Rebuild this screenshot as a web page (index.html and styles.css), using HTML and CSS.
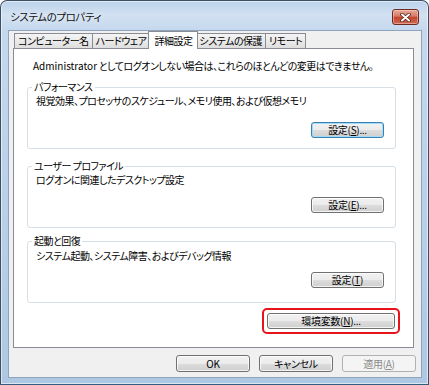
FILE: index.html
```html
<!DOCTYPE html>
<html lang="ja">
<head>
<meta charset="utf-8">
<title>システムのプロパティ</title>
<link rel="stylesheet" href="styles.css">
</head>
<body>
<div class="window">
  <div class="titlebar">
    <span class="title">システムのプロパティ</span>
    <button class="close" aria-label="閉じる">
      <svg width="11" height="9" viewBox="0 0 11 9"><path d="M2 1.5 L9 7.5 M9 1.5 L2 7.5" stroke="#5a2118" stroke-width="3.6" stroke-linecap="round"/><path d="M2 1.5 L9 7.5 M9 1.5 L2 7.5" stroke="#fff" stroke-width="2" stroke-linecap="round"/></svg>
    </button>
  </div>
  <div class="client">
    <div class="tabs">
      <div class="tab">コンピューター名</div>
      <div class="tab">ハードウェア</div>
      <div class="tab active">詳細設定</div>
      <div class="tab">システムの保護</div>
      <div class="tab">リモート</div>
    </div>
    <div class="panel">
      <p class="notice"><span class="latin">Administrator</span> としてログオンしない場合は、これらのほとんどの変更はできません。</p>
      <fieldset class="group g1">
        <legend>パフォーマンス</legend>
        <div class="group-body">
          <p class="desc">視覚効果、プロセッサのスケジュール、メモリ使用、および仮想メモリ</p>
          <button class="btn btn-set btn-default">設定(<u>S</u>)...</button>
        </div>
      </fieldset>
      <fieldset class="group g2">
        <legend>ユーザー プロファイル</legend>
        <div class="group-body">
          <p class="desc">ログオンに関連したデスクトップ設定</p>
          <button class="btn btn-set">設定(<u>E</u>)...</button>
        </div>
      </fieldset>
      <fieldset class="group g3">
        <legend>起動と回復</legend>
        <div class="group-body">
          <p class="desc">システム起動、システム障害、およびデバッグ情報</p>
          <button class="btn btn-set">設定(<u>T</u>)</button>
        </div>
      </fieldset>
      <div class="highlight">
        <button class="btn btn-env">環境変数(<u>N</u>)...</button>
      </div>
    </div>
    <div class="actions">
      <button class="btn btn-action">OK</button>
      <button class="btn btn-action">キャンセル</button>
      <button class="btn btn-action" disabled>適用(<u>A</u>)</button>
    </div>
  </div>
</div>
</body>
</html>
```
FILE: styles.css
```css
html, body {
  margin: 0;
  padding: 0;
  background: #ffffff;
}

body {
  font-family: "Noto Sans CJK JP", "Noto Sans", sans-serif;
  font-size: 10px;
  letter-spacing: -0.5px;
  font-feature-settings: "palt";
  color: #000;
}

.window {
  width: 429px;
  height: 385px;
  box-sizing: border-box;
  border: 1px solid #3d4f63;
  border-bottom-color: #2f5f7c;
  border-radius: 7px 7px 0 0;
  background: linear-gradient(180deg, #bcd2ea 0, #d2e1f2 14px, #c5d8ed 29px, #b8cfe8 60%, #aec8e3 100%);
  box-shadow: inset 0 0 0 1px rgba(255, 255, 255, 0.55);
  padding: 0 6px 6px 7px;
  display: flex;
  flex-direction: column;
}

.titlebar {
  height: 29px;
  display: flex;
  align-items: flex-start;
}

.title {
  margin-top: 8px;
  padding-left: 2px;
  font-size: 10.5px;
  letter-spacing: -0.4px;
  line-height: 15px;
  color: #111;
  text-shadow: 0 0 6px rgba(255, 255, 255, 0.9);
}

.close {
  margin-left: auto;
  margin-top: 8px;
  margin-right: 3px;
  width: 27px;
  height: 16px;
  padding: 0;
  border: 1px solid #6e2b22;
  border-radius: 3px;
  background: linear-gradient(180deg, #e9a99a 0, #d77a66 45%, #c4432d 50%, #cf6a51 100%);
  box-shadow: inset 0 0 0 1px rgba(255, 220, 210, 0.45);
  display: flex;
  align-items: center;
  justify-content: center;
}

.client {
  flex: 1;
  background: #f0f0f0;
  border: 1px solid #8ea4bc;
  display: flex;
  flex-direction: column;
}

.tabs {
  height: 17px;
  display: flex;
  align-items: flex-end;
  margin-left: 5px;
}

.tab {
  height: 14px;
  box-sizing: content-box;
  border: 1px solid #898c95;
  border-bottom: none;
  border-right: none;
  padding: 0 3px;
  background: linear-gradient(180deg, #f4f4f4 0, #eaeaea 50%, #dedede 100%);
  display: flex;
  align-items: center;
  line-height: 14px;
  white-space: nowrap;
}

.tab:last-child {
  border-right: 1px solid #898c95;
}

.tab.active {
  height: 17px;
  margin-bottom: -1px;
  margin-left: -1px;
  margin-right: -2px;
  padding: 0 5px;
  border-right: 1px solid #898c95;
  background: #ffffff;
  position: relative;
  z-index: 1;
}

.tab.active + .tab {
  border-left: none;
}

.panel {
  height: 300px;
  box-sizing: border-box;
  margin: 0 7px 0 4px;
  border: 1px solid #898c95;
  background: #ffffff;
  padding: 0 17px 0 13px;
  display: flex;
  flex-direction: column;
}

.notice {
  margin: 11px 0 0 6px;
  line-height: 12px;
  white-space: nowrap;
}

.latin {
  letter-spacing: 0;
}

.group {
  margin: 0;
  border: 1px solid #d5dfe5;
  border-radius: 3px;
  padding: 0 11px 0 8px;
  min-width: 0;
}

.group legend {
  margin-left: -4px;
  padding: 0 2px;
  line-height: 12px;
}

.group-body {
  display: flex;
  flex-direction: column;
}

.desc {
  margin: 2px 0 0 0;
  line-height: 12px;
  white-space: nowrap;
}

.g1 { margin-top: 9px; padding-bottom: 10px; }
.g1 .btn-set { margin-top: 15px; }
.g2 { margin-top: 11px; padding-bottom: 14px; }
.g2 .btn-set { margin-top: 11px; }
.g3 { margin-top: 7px; padding-bottom: 14px; }
.g3 .desc { margin-top: 3px; }
.g3 .btn-set { margin-top: 10px; }

.btn {
  font-family: inherit;
  font-size: 10px;
  letter-spacing: -0.3px;
  font-feature-settings: "palt";
  color: #000;
  height: 16px;
  box-sizing: border-box;
  padding: 0;
  line-height: 14px;
  border: 1px solid #707070;
  border-radius: 3px;
  background: linear-gradient(180deg, #f2f2f2 0, #ebebeb 50%, #dddddd 50%, #cfcfcf 100%);
  box-shadow: inset 0 0 0 1px rgba(255, 255, 255, 0.75);
  white-space: nowrap;
}

.btn u {
  text-underline-offset: 1px;
}

.btn-set {
  align-self: flex-end;
  width: 73px;
}

.btn-default {
  border-color: #3c7fb1;
  box-shadow: inset 0 0 0 1px #9fdcf7;
}

.highlight {
  align-self: flex-end;
  margin: 5px -4px 0 0;
  padding: 3px;
  border: 2px solid #e8141c;
  border-radius: 5px;
  display: flex;
}

.btn-env {
  width: 128px;
}

.actions {
  display: flex;
  justify-content: flex-end;
  gap: 9px;
  margin: 7px 5px 0 0;
}

.btn-action {
  width: 74px;
  height: 17px;
}

.btn-action:disabled {
  color: #8a8a8a;
  border-color: #adb2b5;
  background: #f4f4f4;
  box-shadow: none;
}
```
